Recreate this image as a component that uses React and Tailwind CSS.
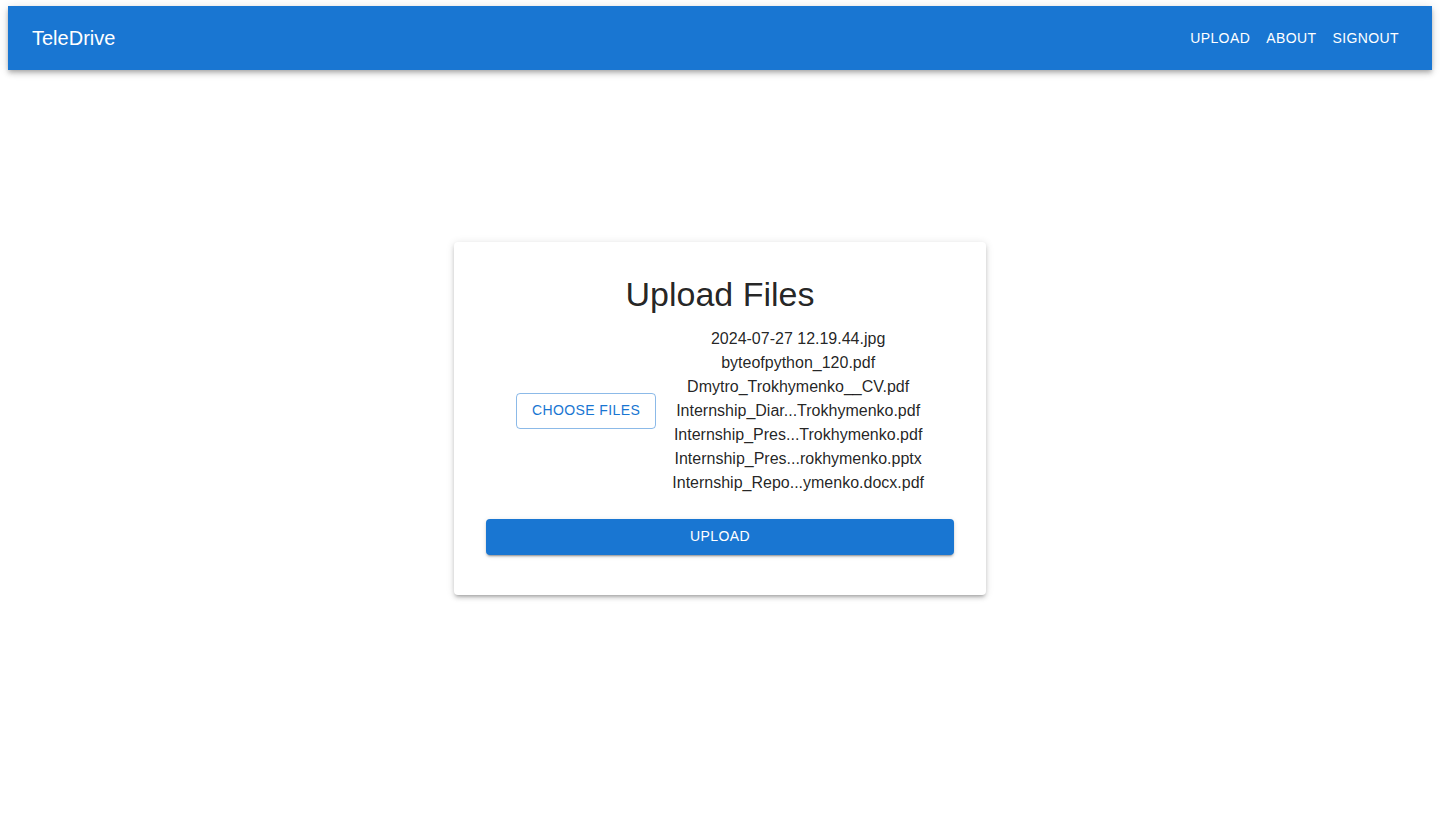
export default function App() {
  const files = [
    "2024-07-27 12.19.44.jpg",
    "byteofpython_120.pdf",
    "Dmytro_Trokhymenko__CV.pdf",
    "Internship_Diar...Trokhymenko.pdf",
    "Internship_Pres...Trokhymenko.pdf",
    "Internship_Pres...rokhymenko.pptx",
    "Internship_Repo...ymenko.docx.pdf",
  ];
  return (
    <div
      className="min-h-screen bg-white px-2 pt-[6px]"
      style={{ fontFamily: '"Liberation Sans", Arial, sans-serif' }}
    >
      <header className="flex h-16 items-center justify-between bg-[#1976d2] pl-6 pr-[25px] text-white shadow-[0px_2px_4px_-1px_rgba(0,0,0,0.2),0px_4px_5px_0px_rgba(0,0,0,0.14),0px_1px_10px_0px_rgba(0,0,0,0.12)]">
        <div className="text-[20px] leading-[1.6]">TeleDrive</div>
        <nav className="flex items-center">
          {["UPLOAD", "ABOUT", "SIGNOUT"].map((t) => (
            <button
              key={t}
              className="px-2 py-[6px] text-[14px] font-medium uppercase leading-[1.75] tracking-[0.4px] text-white"
            >
              {t}
            </button>
          ))}
        </nav>
      </header>

      <main className="flex justify-center pt-[172px]">
        <div className="flex w-[532px] flex-col items-center rounded bg-white px-8 pb-10 pt-[32px] shadow-[0px_3px_3px_-2px_rgba(0,0,0,0.2),0px_3px_4px_0px_rgba(0,0,0,0.14),0px_1px_8px_0px_rgba(0,0,0,0.12)]">
          <h1 className="text-[34px] leading-[1.235] text-[rgba(0,0,0,0.87)]">Upload Files</h1>
          <div className="mt-[11px] flex w-full items-center justify-center gap-4">
            <button className="h-9 rounded border border-[rgba(25,118,210,0.5)] px-[15px] text-[14px] font-medium uppercase tracking-[0.4px] text-[#1976d2]">
              Choose Files
            </button>
            <div className="flex flex-col items-center text-[16px] leading-6 text-[rgba(0,0,0,0.87)]">
              {files.map((f) => (
                <div key={f}>{f}</div>
              ))}
            </div>
          </div>
          <button className="mt-[24px] h-9 w-full rounded bg-[#1976d2] text-[14px] font-medium uppercase tracking-[0.4px] text-white shadow-[0px_3px_1px_-2px_rgba(0,0,0,0.2),0px_2px_2px_0px_rgba(0,0,0,0.14),0px_1px_5px_0px_rgba(0,0,0,0.12)]">
            Upload
          </button>
        </div>
      </main>
    </div>
  );
}
